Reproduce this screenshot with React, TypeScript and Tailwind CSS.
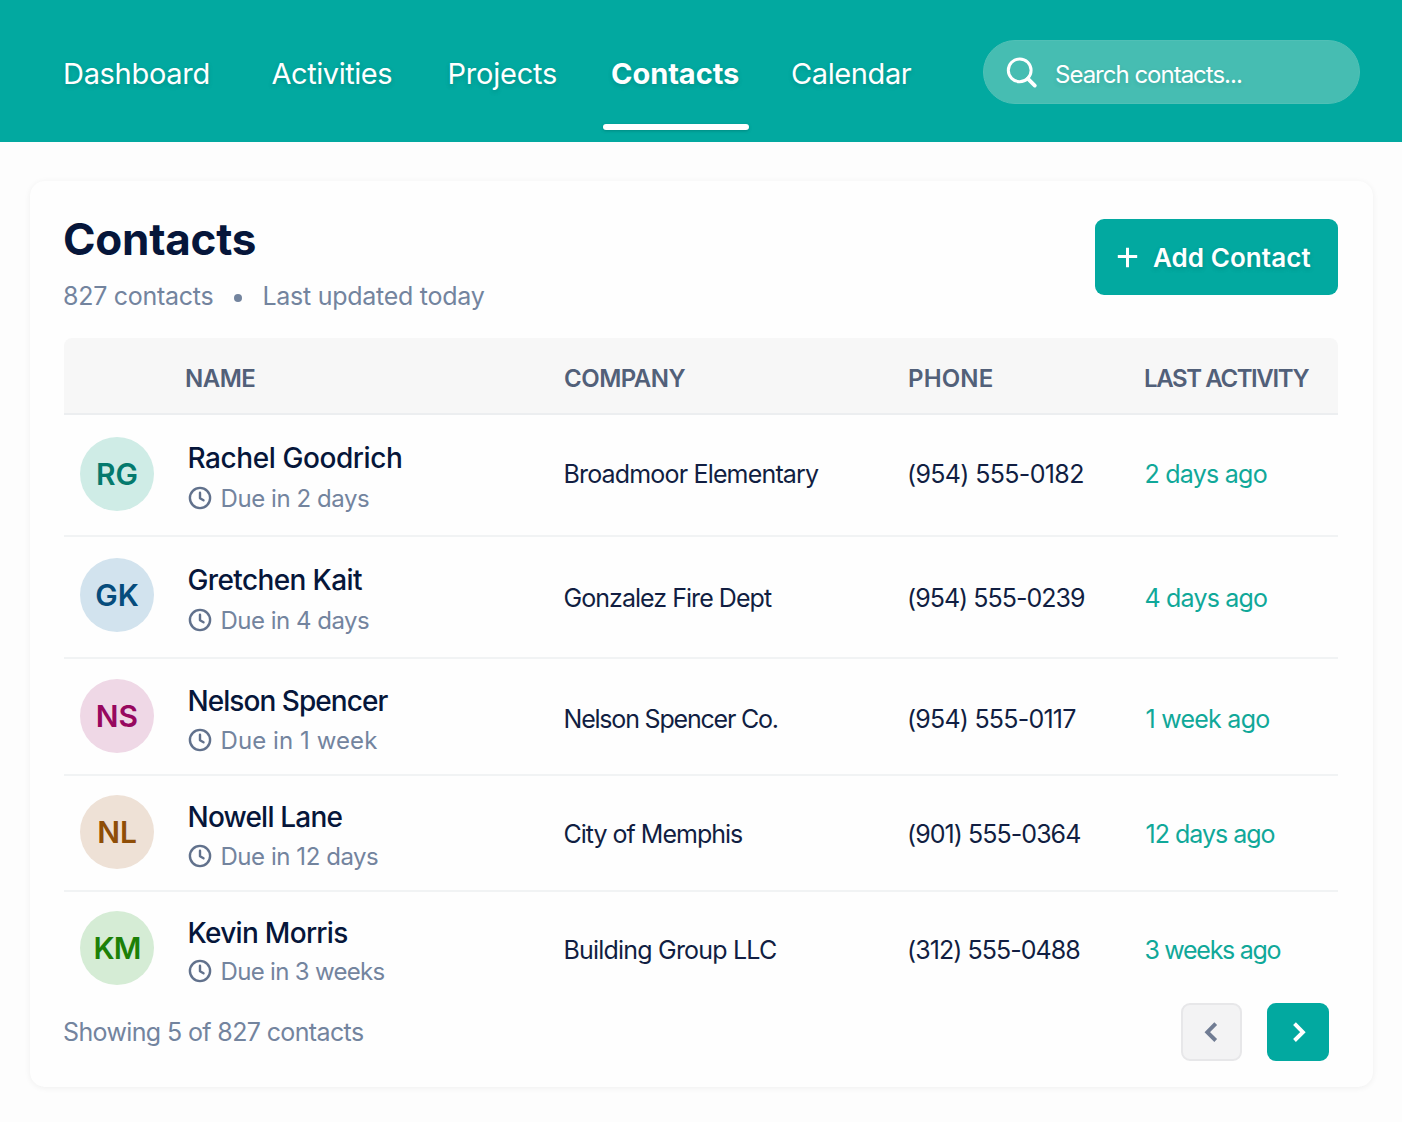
const navLinks = [
  { label: 'Dashboard', box: 'w-[208.5px]', text: 'tracking-[-0.3px]' },
  { label: 'Activities', box: 'w-[176px]', text: 'tracking-[-0.45px]' },
  { label: 'Projects', box: 'w-[163.5px]', text: 'tracking-[-0.22px]' },
  { label: 'Contacts', box: 'w-[180px]', text: 'font-bold tracking-[-0.05px]', active: true },
  { label: 'Calendar', box: 'w-[191px]', text: 'tracking-[-0.4px]' },
];

const contacts = [
  {
    initials: 'RG', name: 'Rachel Goodrich', due: 'Due in 2 days', company: 'Broadmoor Elementary',
    phone: '(954) 555-0182', last: '2 days ago',
    row: 'h-[122px] pt-[22px] border-b-2', avatar: 'bg-[#cfece6] text-[#047a6d]', nameText: 'pt-[3px] tracking-[-0.42px]',
    dueText: 'mt-[7px] tracking-[-0.43px]', cell: 'pt-[21px]',
    companyText: 'tracking-[-0.83px]', phoneText: 'tracking-[-0.65px]', lastText: 'tracking-[-0.75px]',
  },
  {
    initials: 'GK', name: 'Gretchen Kait', due: 'Due in 4 days', company: 'Gonzalez Fire Dept',
    phone: '(954) 555-0239', last: '4 days ago',
    row: 'h-[122px] pt-[21px] border-b-2', avatar: 'bg-[#d2e3ee] text-[#064c7c]', nameText: 'pt-1 tracking-[-0.62px]',
    dueText: 'mt-[7px] tracking-[-0.5px]', cell: 'pt-6',
    companyText: 'tracking-[-0.96px]', phoneText: 'tracking-[-0.98px]', lastText: 'tracking-[-0.8px]',
  },
  {
    initials: 'NS', name: 'Nelson Spencer', due: 'Due in 1 week', company: 'Nelson Spencer Co.',
    phone: '(954) 555-0117', last: '1 week ago',
    row: 'h-[117px] pt-5 border-b-2', avatar: 'bg-[#efd8e6] text-[#97085f]', nameText: 'pt-1 tracking-[-0.95px]',
    dueText: 'mt-1.5 tracking-[0.08px]', cell: 'pt-6',
    companyText: 'tracking-[-1.2px]', phoneText: 'tracking-[-0.78px]', lastText: 'pl-px tracking-[-0.75px]',
  },
  {
    initials: 'NL', name: 'Nowell Lane', due: 'Due in 12 days', company: 'City of Memphis',
    phone: '(901) 555-0364', last: '12 days ago',
    row: 'h-[116px] pt-[19px] border-b-2', avatar: 'bg-[#eee1d6] text-[#8f4e07]', nameText: 'pt-1 tracking-[-0.8px]',
    dueText: 'mt-1.5 tracking-[-0.45px]', cell: 'pt-[23px]',
    companyText: 'tracking-[-1px]', phoneText: 'tracking-[-0.95px]', lastText: 'pl-px tracking-[-1px]',
  },
  {
    initials: 'KM', name: 'Kevin Morris', due: 'Due in 3 weeks', company: 'Building Group LLC',
    phone: '(312) 555-0488', last: '3 weeks ago',
    row: 'h-[111px] pt-[19px]', avatar: 'bg-[#d5ecd5] text-[#1c8007] tracking-[-1px]', nameText: 'pt-1 tracking-[-0.7px]',
    dueText: 'mt-[5px] tracking-[-0.68px]', cell: 'pt-[23px]',
    companyText: 'tracking-[-0.8px]', phoneText: 'tracking-[-0.95px]', lastText: 'tracking-[-1.3px]',
  },
];

function SearchIcon() {
  return (
    <svg width="36" height="36" viewBox="0 0 36 36" fill="none" stroke="currentColor" strokeWidth="3">
      <circle cx="15.7" cy="16.3" r="11.4" />
      <path d="M23.8 24.6 30.8 31.6" strokeWidth="3.8" strokeLinecap="round" />
    </svg>
  );
}

function ClockIcon() {
  return (
    <svg width="24" height="24" viewBox="0 0 24 24" fill="none" stroke="currentColor" strokeWidth="2.4" strokeLinecap="round" strokeLinejoin="round">
      <circle cx="12" cy="12" r="10.1" />
      <path d="M12 6.8v5.4l3.5 2.1" />
    </svg>
  );
}

function Header() {
  return (
    <header className="flex h-[142px] items-start bg-[#02a9a0] pl-[63px] text-white">
      <nav className="flex pt-14 text-[29px] leading-9 [text-shadow:0_2px_4px_rgba(0,80,75,0.25)]">
        {navLinks.map((link) => (
          <div key={link.label} className={link.box}>
            <a className={`relative inline-block ${link.text}`}>
              {link.label}
              {link.active && (
                <span className="absolute top-[68px] -left-2 h-1.5 w-[146px] rounded-full bg-white shadow-[0_1px_3px_rgba(0,80,75,0.35)]" />
              )}
            </a>
          </div>
        ))}
      </nav>
      <div className="mt-10 ml-[1px] flex h-16 w-[377px] items-center rounded-full border border-[#50c0b6] bg-[#46bdb2] pl-5">
        <SearchIcon />
        <span className="mt-1.5 ml-[15px] text-[24px] leading-8 tracking-[-1px] whitespace-nowrap [text-shadow:0_2px_4px_rgba(0,80,75,0.15)]">
          Search contacts...
        </span>
      </div>
    </header>
  );
}

export default function App() {
  return (
    <div className="h-[1122px] w-[1402px] overflow-hidden bg-[#fdfdfd] font-['Inter',sans-serif]">
      <Header />

      {/* Contacts card */}
      <main className="mt-[39px] ml-[30px] h-[906px] w-[1343px] rounded-[15px] bg-[#fefefe] pt-8 pr-[35px] pl-[34px] shadow-[0_1px_6px_rgba(0,0,0,0.06)]">
        <div className="flex h-[125px] justify-between">
          <div>
            <h1 className="-ml-px text-[44px] leading-[52px] font-bold tracking-[-0.25px] text-[#06163a]">Contacts</h1>
            <div className="mt-[15px] flex items-center text-[25px] leading-8 tracking-[-0.27px] text-[#73849e]">
              <span className="-ml-px">827 contacts</span>
              <span className="mt-1 mr-5 ml-[21px] size-2 rounded-full bg-[#73849e]" />
              <span>Last updated today</span>
            </div>
          </div>
          <button className="mt-1.5 flex h-[76px] w-[243px] items-center rounded-[9px] bg-[#02a9a0] pl-[22px] text-[26px] font-semibold text-white [text-shadow:0_2px_4px_rgba(0,80,75,0.25)]">
            <svg width="21" height="21" viewBox="0 0 21 21" stroke="currentColor" strokeWidth="3">
              <path d="M10.5 .8v19.4M.8 9.5h19.4" />
            </svg>
            <span className="ml-[15px] tracking-[0.06px]">Add Contact</span>
          </button>
        </div>

        <div className="grid h-[77px] grid-cols-[121px_379px_344px_236px_1fr] items-center rounded-t-lg border-b-2 border-[#eceef0] bg-[#f7f7f7] pt-1.5 text-[24px] font-semibold whitespace-nowrap text-[#526079]">
          <span />
          <span className="tracking-[-0.5px]">NAME</span>
          <span className="tracking-[-0.5px]">COMPANY</span>
          <span className="tracking-[0.15px]">PHONE</span>
          <span className="tracking-[-1.4px]">LAST ACTIVITY</span>
        </div>

        {contacts.map((c) => (
          <div key={c.name} className={`grid grid-cols-[108px_376px_344px_237px_1fr] items-start border-[#f1f3f4] pl-4 text-[25px] leading-8 whitespace-nowrap text-[#111e42] ${c.row}`}>
            <div className={`flex size-[74px] items-center justify-center rounded-full pb-px text-[30px] font-semibold ${c.avatar}`}>
              {c.initials}
            </div>
            <div>
              <div className={`-ml-[0.5px] text-[28px] leading-9 font-medium text-[#06163a] ${c.nameText}`}>{c.name}</div>
              <div className={`flex items-center text-[24px] text-[#73849e] ${c.dueText}`}>
                <span className="-mt-0.5 -ml-[0.5px] text-[#61718c]"><ClockIcon /></span>
                <span className="ml-[9px]">{c.due}</span>
              </div>
            </div>
            <div className={`-ml-[0.5px] ${c.cell} ${c.companyText}`}>{c.company}</div>
            <div className={`-ml-px ${c.cell} ${c.phoneText}`}>{c.phone}</div>
            <div className={`-ml-[0.5px] text-[#10a899] ${c.cell} ${c.lastText}`}>{c.last}</div>
          </div>
        ))}

        <div className="flex h-[58px] items-center">
          <span className="-ml-px pt-0.5 text-[25px] tracking-[-0.63px] text-[#73849e]">Showing 5 of 827 contacts</span>
          <button className="ml-auto flex h-[58px] w-[61px] items-center justify-center rounded-[9px] border-2 border-[#e7e7e9] bg-[#f3f3f4] text-[#707c93]">
            <svg width="20" height="24" viewBox="0 0 20 24" fill="none" stroke="currentColor" strokeWidth="3.9">
              <path d="M13.7 3.7 5.3 12.2l8.4 8.3" />
            </svg>
          </button>
          <button className="mr-[9px] ml-[25px] flex h-[58px] w-[62px] items-center justify-center rounded-[9px] bg-[#02a9a0] text-white">
            <svg width="20" height="24" viewBox="0 0 20 24" fill="none" stroke="currentColor" strokeWidth="3.9">
              <path d="M6.5 3.7 14.9 12.2l-8.4 8.3" />
            </svg>
          </button>
        </div>
      </main>
    </div>
  );
}
